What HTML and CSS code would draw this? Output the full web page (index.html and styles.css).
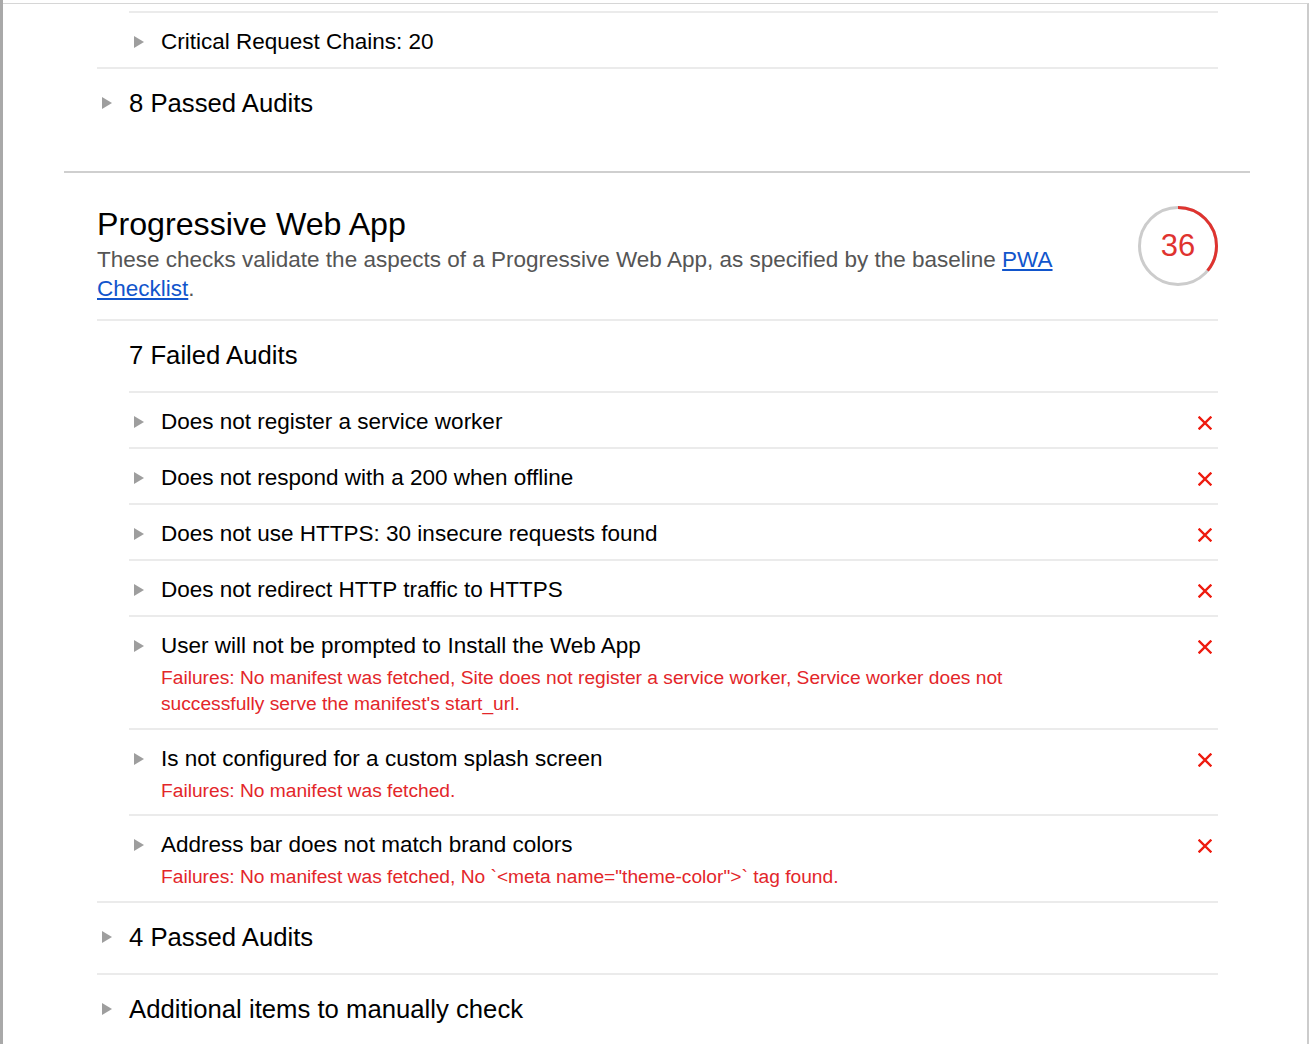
FILE: index.html
```html
<!DOCTYPE html>
<html>
<head>
<meta charset="utf-8">
<link rel="stylesheet" href="styles.css">
</head>
<body>
<div class="viewport">
  <div class="leftbar"></div>
  <div class="page">
    <div class="prev">
      <div class="inner">
        <div class="audit sub">
          <span class="tri"></span>
          <div class="audit-body"><div class="audit-title">Critical Request Chains: 20</div></div>
        </div>
        <div class="group">
          <span class="tri"></span>
          <span class="group-title">8 Passed Audits</span>
        </div>
      </div>
    </div>

    <div class="section">
      <div class="inner">
        <div class="cat-header">
          <div class="cat-text">
            <div class="cat-title">Progressive Web App</div>
            <div class="cat-desc">These checks validate the aspects of a Progressive Web App, as specified by the baseline <a href="#">PWA Checklist</a>.</div>
          </div>
          <div class="gauge">
            <svg width="80" height="80" viewBox="0 0 80 80">
              <circle cx="40" cy="40" r="38.5" fill="none" stroke="#cccccc" stroke-width="3"/>
              <circle cx="40" cy="40" r="38.5" fill="none" stroke="#df332f" stroke-width="3"
                stroke-dasharray="87.1 1000" transform="rotate(-90 40 40)"/>
            </svg>
            <span class="gauge-num">36</span>
          </div>
        </div>

        <div class="group">
          <span class="tri-space"></span>
          <span class="group-title">7 Failed Audits</span>
        </div>

        <div class="audit sub">
          <span class="tri"></span>
          <div class="audit-body"><div class="audit-title">Does not register a service worker</div></div>
          <svg class="fail-x" width="14" height="14" viewBox="0 0 14 14"><path d="M1.5 1.5L12.5 12.5M12.5 1.5L1.5 12.5" stroke="#ee1b0f" stroke-width="2.4" stroke-linecap="square" fill="none"/></svg>
        </div>
        <div class="audit sub">
          <span class="tri"></span>
          <div class="audit-body"><div class="audit-title">Does not respond with a 200 when offline</div></div>
          <svg class="fail-x" width="14" height="14" viewBox="0 0 14 14"><path d="M1.5 1.5L12.5 12.5M12.5 1.5L1.5 12.5" stroke="#ee1b0f" stroke-width="2.4" stroke-linecap="square" fill="none"/></svg>
        </div>
        <div class="audit sub">
          <span class="tri"></span>
          <div class="audit-body"><div class="audit-title">Does not use HTTPS: 30 insecure requests found</div></div>
          <svg class="fail-x" width="14" height="14" viewBox="0 0 14 14"><path d="M1.5 1.5L12.5 12.5M12.5 1.5L1.5 12.5" stroke="#ee1b0f" stroke-width="2.4" stroke-linecap="square" fill="none"/></svg>
        </div>
        <div class="audit sub">
          <span class="tri"></span>
          <div class="audit-body"><div class="audit-title">Does not redirect HTTP traffic to HTTPS</div></div>
          <svg class="fail-x" width="14" height="14" viewBox="0 0 14 14"><path d="M1.5 1.5L12.5 12.5M12.5 1.5L1.5 12.5" stroke="#ee1b0f" stroke-width="2.4" stroke-linecap="square" fill="none"/></svg>
        </div>
        <div class="audit sub">
          <span class="tri"></span>
          <div class="audit-body">
            <div class="audit-title">User will not be prompted to Install the Web App</div>
            <div class="failure">Failures: No manifest was fetched, Site does not register a service worker, Service worker does not successfully serve the manifest's start_url.</div>
          </div>
          <svg class="fail-x" width="14" height="14" viewBox="0 0 14 14"><path d="M1.5 1.5L12.5 12.5M12.5 1.5L1.5 12.5" stroke="#ee1b0f" stroke-width="2.4" stroke-linecap="square" fill="none"/></svg>
        </div>
        <div class="audit sub">
          <span class="tri"></span>
          <div class="audit-body">
            <div class="audit-title">Is not configured for a custom splash screen</div>
            <div class="failure">Failures: No manifest was fetched.</div>
          </div>
          <svg class="fail-x" width="14" height="14" viewBox="0 0 14 14"><path d="M1.5 1.5L12.5 12.5M12.5 1.5L1.5 12.5" stroke="#ee1b0f" stroke-width="2.4" stroke-linecap="square" fill="none"/></svg>
        </div>
        <div class="audit sub">
          <span class="tri"></span>
          <div class="audit-body">
            <div class="audit-title">Address bar does not match brand colors</div>
            <div class="failure">Failures: No manifest was fetched, No `&lt;meta name="theme-color"&gt;` tag found.</div>
          </div>
          <svg class="fail-x" width="14" height="14" viewBox="0 0 14 14"><path d="M1.5 1.5L12.5 12.5M12.5 1.5L1.5 12.5" stroke="#ee1b0f" stroke-width="2.4" stroke-linecap="square" fill="none"/></svg>
        </div>

        <div class="group outer">
          <span class="tri"></span>
          <span class="group-title">4 Passed Audits</span>
        </div>
        <div class="group outer">
          <span class="tri"></span>
          <span class="group-title">Additional items to manually check</span>
        </div>
      </div>
    </div>
  </div>
</div>
</body>
</html>
```

FILE: styles.css
```css
html, body {
  margin: 0;
  padding: 0;
  background: #ffffff;
  font-family: "Liberation Sans", Arial, sans-serif;
  color: #000;
}
.viewport {
  display: flex;
  height: 1044px;
  overflow: hidden;
}
.leftbar {
  width: 3px;
  background: #a9a9a9;
  flex: none;
}
.page {
  flex: 1;
  margin-top: 3px;
  border-top: 1px solid #d6d6d6;
  border-right: 2px solid #cccccc;
  padding: 0 57px 0 61px;
}
.inner {
  padding: 0 32px 0 33px;
}
.prev .inner {
  padding-bottom: 32px;
  padding-top: 7px;
}
.section {
  border-top: 2px solid #cfcfcf;
}
.audit {
  display: flex;
  align-items: flex-start;
  border-top: 2px solid #ebebeb;
  padding: 16px 6px 12px 0;
}
.sub {
  margin-left: 32px;
}
.tri {
  flex: none;
  width: 0;
  height: 0;
  border-top: 6px solid transparent;
  border-bottom: 6px solid transparent;
  border-left: 10px solid #9e9e9e;
  margin: 7px 17px 0 5px;
}
.tri-space {
  flex: none;
  width: 32px;
}
.audit-body {
  flex: 1;
}
.audit-title {
  font-size: 22.5px;
  line-height: 26px;
}
.failure {
  color: #e3262a;
  font-size: 19.2px;
  line-height: 26px;
  margin: 6px 0 -1.5px;
  max-width: 860px;
}
.fail-x {
  flex: none;
  display: block;
  margin-top: 7px;
}
.group {
  display: flex;
  align-items: center;
  border-top: 2px solid #ebebeb;
  padding: 19px 0 21px;
}
.group .tri {
  margin-top: 0;
}
.group-title {
  font-size: 25.7px;
  line-height: 30px;
}
.cat-header {
  display: flex;
  align-items: flex-start;
  gap: 40px;
  padding: 33px 0 16px;
}
.cat-text {
  flex: 1;
}
.cat-title {
  font-size: 32.2px;
  line-height: 36px;
}
.cat-desc {
  font-size: 22.5px;
  line-height: 29px;
  color: #555555;
  margin-top: 3px;
}
.cat-desc a {
  color: #1155cc;
  text-decoration: underline;
}
.gauge {
  flex: none;
  position: relative;
  width: 80px;
  height: 80px;
  margin-top: 0;
}
.gauge svg {
  display: block;
}
.gauge-num {
  position: absolute;
  inset: 0;
  display: flex;
  align-items: center;
  justify-content: center;
  color: #df332f;
  font-size: 31px;
}
```
